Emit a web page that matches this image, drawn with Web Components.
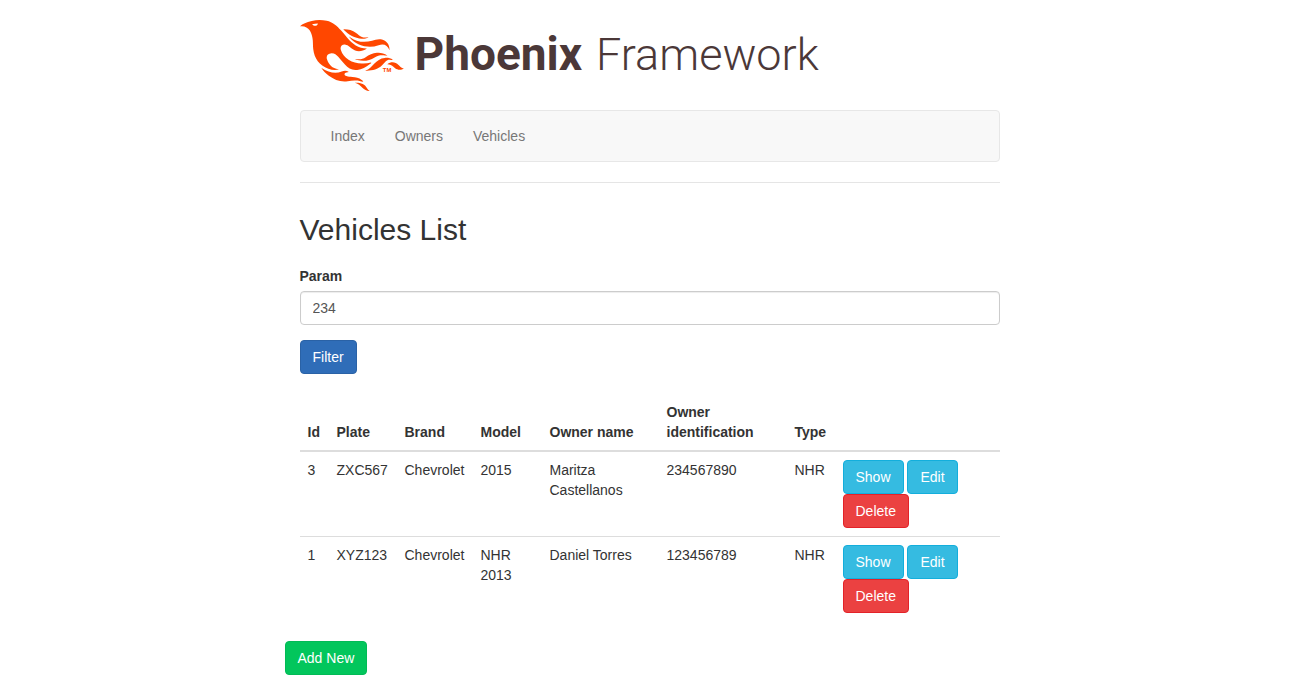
<!DOCTYPE html>
<html lang="en">
<head>
<meta charset="utf-8">
<meta name="viewport" content="width=device-width, initial-scale=1">
<title>Vehicles List</title>
<style>
body { margin: 0; background: #fff; color: #333; font: 14px/20px "Liberation Sans", Arial, sans-serif; }
</style>
</head>
<body>
<page-shell>
  <brand-logo slot="header"></brand-logo>
  <nav-bar slot="header">
    <nav-item href="#index">Index</nav-item>
    <nav-item href="#owners">Owners</nav-item>
    <nav-item href="#vehicles">Vehicles</nav-item>
  </nav-bar>
  <page-title>Vehicles List</page-title>
  <filter-form value="234"></filter-form>
  <vehicle-table></vehicle-table>
  <page-actions><ui-button kind="success" href="#new">Add New</ui-button></page-actions>
</page-shell>
<script>
const define = (name, html, setup) => {
  const template = document.createElement('template');
  template.innerHTML = '<style>*{box-sizing:border-box}</style>' + html;
  customElements.define(name, class extends HTMLElement {
    constructor() {
      super();
      this.attachShadow({ mode: 'open' }).append(template.content.cloneNode(true));
    }
    connectedCallback() { if (setup) setup(this, this.shadowRoot); }
  });
};

define('page-shell', `
<style>
:host { display: block; box-sizing: border-box; max-width: 730px; margin: 0 auto; padding: 20px 15px; }
header { display: block; border-bottom: 1px solid #e5e5e5; padding-bottom: 20px; margin-bottom: 30px; }
</style>
<header><slot name="header"></slot></header>
<main><slot></slot></main>`);

define('brand-logo', `
<style>
:host { display: block; }
a { display: flex; align-items: flex-start; height: 71px; color: #4b3838; text-decoration: none; }
svg { display: block; flex: none; }
svg text { font: bold 4px "Liberation Sans", sans-serif; }
.words { display: flex; align-items: baseline; gap: 14px; margin-left: 10px; font: 300 45px/68px Roboto, sans-serif; white-space: nowrap; }
b { font-size: 46px; font-weight: 700; }
</style>
<a href="#home">
<svg width="105" height="71" viewBox="0 0 71 48" fill="#ff4700" aria-hidden="true">
<path d="m26.371 33.477-.552-.1c-3.92-.729-6.397-3.1-7.57-6.829-.733-2.324.597-4.035 3.035-4.148 1.995-.092 3.362 1.055 4.57 2.39 1.557 1.72 2.984 3.558 4.514 5.305 2.202 2.515 4.797 4.134 8.347 3.634 3.183-.448 5.958-1.725 8.371-3.828.363-.316.761-.592 1.144-.886l-.241-.284c-2.027.63-4.093.841-6.205.735-3.195-.16-6.24-.828-8.964-2.582-2.486-1.601-4.319-3.746-5.19-6.611-.704-2.315.736-3.934 3.135-3.6.948.133 1.746.56 2.463 1.165.583.493 1.143 1.015 1.738 1.493 2.8 2.25 6.712 2.375 10.265-.068-5.842-.026-9.817-3.24-13.308-7.313-1.366-1.594-2.7-3.216-4.095-4.785-2.698-3.036-5.692-5.71-9.79-6.623C12.8-.623 7.745.14 2.893 2.361 1.926 2.804.997 3.319 0 4.149c.494 0 .763.006 1.032 0 2.446-.064 4.28 1.023 5.602 3.024.962 1.457 1.415 3.104 1.761 4.798.513 2.515.247 5.078.544 7.605.761 6.494 4.08 11.026 10.26 13.346 2.267.852 4.591 1.135 7.172.555ZM10.751 3.852c-.976.246-1.756-.148-2.56-.962 1.377-.343 2.592-.476 3.897-.528-.107.848-.607 1.306-1.336 1.49Zm32.002 37.924c-.085-.626-.62-.901-1.04-1.228-1.857-1.446-4.03-1.958-6.333-2-1.375-.026-2.735-.128-4.031-.61-.595-.22-1.26-.505-1.244-1.272.015-.78.693-1 1.31-1.184.505-.15 1.026-.247 1.6-.382-1.46-.936-2.886-1.065-4.787-.3-2.993 1.202-5.943 1.06-8.926-.017-1.684-.608-3.179-1.563-4.735-2.408l-.077.057c1.29 2.115 3.034 3.817 5.004 5.271 3.793 2.8 7.936 4.471 12.784 3.73A66.714 66.714 0 0 1 37 40.877c1.98-.16 3.866.398 5.753.899Zm-9.14-30.345c-.105-.076-.206-.266-.42-.069 1.745 2.36 3.985 4.098 6.683 5.193 4.354 1.767 8.773 2.07 13.293.51 3.51-1.21 6.033-.028 7.343 3.38.19-3.955-2.137-6.837-5.843-7.401-2.084-.318-4.01.373-5.962.94-5.434 1.575-10.485.798-15.094-2.553Zm27.085 15.425c.708.059 1.416.123 2.124.185-1.6-1.405-3.55-1.517-5.523-1.404-3.003.17-5.167 1.903-7.14 3.972-1.739 1.824-3.31 3.87-5.903 4.604.043.078.054.117.066.117.35.005.699.021 1.047.005 3.768-.17 7.317-.965 10.14-3.7.89-.86 1.685-1.817 2.544-2.71.716-.746 1.584-1.159 2.645-1.07Zm-8.753-4.67c-2.812.246-5.254 1.409-7.548 2.943-1.766 1.18-3.654 1.738-5.776 1.37-.374-.066-.75-.114-1.124-.17l-.013.156c.135.07.265.151.405.207.354.14.702.308 1.07.395 4.083.971 7.992.474 11.516-1.803 2.221-1.435 4.521-1.707 7.013-1.336.252.038.503.083.756.107.234.022.479.255.795.003-2.179-1.574-4.526-2.096-7.094-1.872Zm-10.049-9.544c1.475.051 2.943-.142 4.486-1.059-.452.04-.643.04-.827.076-2.126.424-4.033-.04-5.733-1.383-.623-.493-1.257-.974-1.889-1.457-2.503-1.914-5.374-2.555-8.514-2.5.05.154.054.26.108.315 3.417 3.455 7.371 5.836 12.369 6.008Zm24.727 17.731c-2.114-2.097-4.952-2.367-7.578-.537 1.738.078 3.043.632 4.101 1.728.374.388.763.768 1.182 1.106 1.6 1.29 4.311 1.352 5.896.155-1.861-.726-1.861-.726-3.601-2.452Zm-21.058 16.06c-1.858-3.46-4.981-4.24-8.59-4.008a9.667 9.667 0 0 1 2.977 1.39c.84.586 1.547 1.311 2.243 2.055 1.38 1.473 3.534 2.376 4.962 2.07-.656-.412-1.238-.848-1.592-1.507Z"/>
<text x="56" y="35">TM</text>
</svg>
<span class="words"><b>Phoenix</b><span>Framework</span></span>
</a>`);

define('nav-bar', `
<style>
:host { display: block; margin-top: 19px; }
nav { display: flex; border: 1px solid #e7e7e7; border-radius: 4px; background: #f8f8f8; padding: 0 15px; }
</style>
<nav><slot></slot></nav>`);

define('nav-item', `
<style>
:host { display: block; }
a { display: block; padding: 15px; color: #777; text-decoration: none; }
a:hover { color: #333; }
</style>
<a><slot></slot></a>`, (host, root) => { root.querySelector('a').href = host.getAttribute('href'); });

define('page-title', `
<style>
:host { display: block; margin-bottom: 20px; }
h2 { margin: 0; font-size: 30px; line-height: 33px; font-weight: 400; }
</style>
<h2><slot></slot></h2>`);

define('ui-button', `
<style>
:host { display: inline-block; vertical-align: middle; --bg: #2f6db8; --edge: #2a62a6; }
:host([kind="info"]) { --bg: #35bbe1; --edge: #13aedc; }
:host([kind="danger"]) { --bg: #eb4141; --edge: #e32228; }
:host([kind="success"]) { --bg: #02c65c; --edge: #02ba56; }
a, button { display: block; margin: 0; padding: 6px 12px; border: 1px solid var(--edge); border-radius: 4px;
  background: var(--bg); color: #fff; font: inherit; line-height: 20px; text-decoration: none; white-space: nowrap; cursor: pointer; }
</style>`, (host, root) => {
  if (root.querySelector('a, button')) return;
  const href = host.getAttribute('href');
  const control = document.createElement(href ? 'a' : 'button');
  if (href) control.href = href; else control.type = 'button';
  control.append(document.createElement('slot'));
  root.append(control);
});

define('filter-form', `
<style>
:host { display: block; margin-bottom: 20px; }
form { display: flex; flex-direction: column; align-items: flex-start; }
label { margin-bottom: 5px; font-weight: 700; }
input { width: 100%; height: 34px; margin: 0 0 15px; padding: 6px 12px; border: 1px solid #ccc; border-radius: 4px;
  background: #fff; box-shadow: inset 0 1px 1px rgba(0,0,0,.075); color: #555; font: inherit; }
</style>
<form>
<label for="param">Param</label>
<input id="param" name="param" type="text">
<ui-button kind="primary">Filter</ui-button>
</form>`, (host, root) => {
  root.querySelector('input').value = host.getAttribute('value') || '';
  root.querySelector('form').addEventListener('submit', e => e.preventDefault());
});

define('vehicle-table', `
<style>
:host { display: block; margin-bottom: 20px; }
table { width: 100%; border-collapse: separate; border-spacing: 0; }
th, td { padding: 8px; text-align: left; }
th { vertical-align: bottom; font-weight: 700; border-bottom: 2px solid #ddd; }
td { vertical-align: top; }
tr + tr td { border-top: 1px solid #ddd; }
.id { width: 29px; } .plate { width: 68px; } .brand { width: 76px; } .model { width: 69px; }
.owner { width: 117px; } .ident { width: 128px; } .type { width: 48px; } .actions { width: 165px; }
</style>
<table>
<colgroup><col class="id"><col class="plate"><col class="brand"><col class="model"><col class="owner"><col class="ident"><col class="type"><col class="actions"></colgroup>
<thead><tr><th>Id</th><th>Plate</th><th>Brand</th><th>Model</th><th>Owner name</th><th>Owner identification</th><th>Type</th><th></th></tr></thead>
<tbody></tbody>
</table>`, (host, root) => {
  const rows = [
    ['3', 'ZXC567', 'Chevrolet', '2015', 'Maritza Castellanos', '234567890', 'NHR'],
    ['1', 'XYZ123', 'Chevrolet', 'NHR 2013', 'Daniel Torres', '123456789', 'NHR']
  ];
  root.querySelector('tbody').innerHTML = rows.map(r => `<tr>${r.map(v => `<td>${v}</td>`).join('')}<td>
    <ui-button kind="info" href="#show-${r[0]}">Show</ui-button>
    <ui-button kind="info" href="#edit-${r[0]}">Edit</ui-button>
    <ui-button kind="danger">Delete</ui-button></td></tr>`).join('');
});

define('page-actions', `
<style>:host { display: flex; margin-left: -15px; }</style>
<slot></slot>`);
</script>
</body>
</html>
